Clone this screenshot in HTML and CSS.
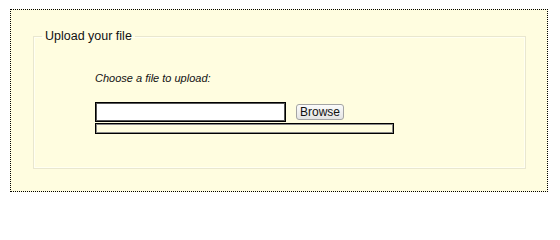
FILE: index.html
```html
<!DOCTYPE html>
<html>
<head>
<meta charset="utf-8">
<link rel="stylesheet" href="styles.css">
</head>
<body>
<div class="box">
  <fieldset class="panel">
    <legend class="panel-title">Upload your file</legend>
    <div class="panel-body">
      <p class="prompt">Choose a file to upload:</p>
      <div class="file-row">
        <div class="file-field"></div>
        <button class="browse" type="button">Browse</button>
      </div>
      <div class="progress"></div>
    </div>
  </fieldset>
</div>
</body>
</html>
```

FILE: styles.css
```css
html, body {
  margin: 0;
  padding: 0;
  background: #ffffff;
}
body {
  font-family: "Liberation Sans", Arial, sans-serif;
  color: #111;
}
.box {
  margin: 9px 0 0 10px;
  width: 536px;
  height: 181px;
  border: 1px dotted #000;
  background: #fffde0;
}
.panel {
  margin: 19px 0 0 22px;
  padding: 0;
  width: 491px;
  border: 1px solid #e9e7cf;
  box-shadow: inset 0 0 0 1px #fffff2;
}
.panel-title {
  margin-left: 8px;
  padding: 0 3px;
  font-size: 12.5px;
  line-height: 15px;
  color: #111;
}
.panel-body {
  height: 124px;
  box-sizing: border-box;
  padding: 28px 0 0 61px;
}
.prompt {
  margin: 0;
  font-size: 11px;
  line-height: 13px;
  font-style: italic;
}
.file-row {
  display: flex;
  align-items: center;
  gap: 10px;
  margin-top: 17px;
}
.file-field {
  width: 191px;
  height: 20px;
  box-sizing: border-box;
  border: 1px solid #000;
  box-shadow: inset 0 0 0 1px #555;
  background: #fff;
}
.browse {
  box-sizing: border-box;
  width: 48px;
  height: 16px;
  padding: 0;
  border: 1px solid #a4a4a4;
  border-radius: 3px;
  background: linear-gradient(#fbfbfb, #e4e4e4);
  font-family: "Liberation Sans", Arial, sans-serif;
  font-size: 12px;
  line-height: 14px;
  color: #111;
}
.progress {
  margin-top: 1px;
  width: 299px;
  height: 11px;
  box-sizing: border-box;
  border: 1px solid #000;
  box-shadow: inset 0 0 0 1px #888;
  background: #fffde0;
}
```
